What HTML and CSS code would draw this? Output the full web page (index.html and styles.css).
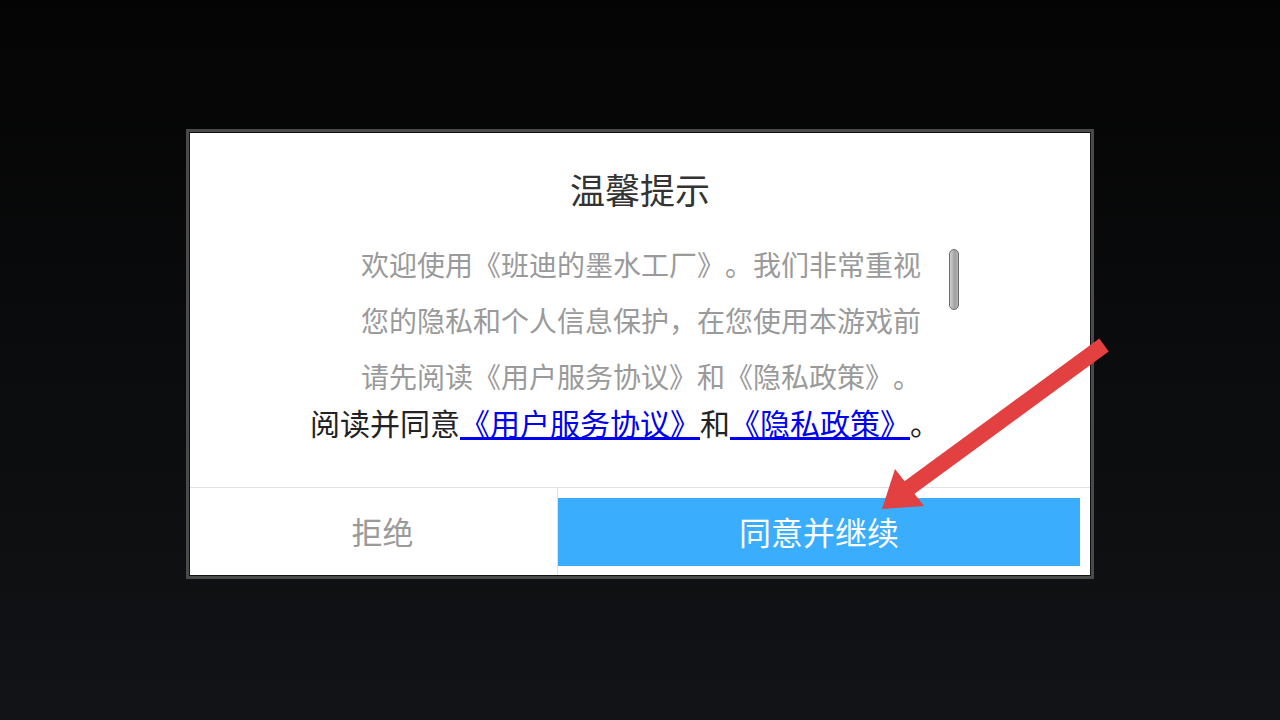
FILE: index.html
```html
<!DOCTYPE html>
<html lang="zh-CN">
<head>
    <meta charset="UTF-8">
    <meta name="viewport" content="width=device-width, initial-scale=1.0">
    <title>温馨提示</title>
    <link rel="stylesheet" href="styles.css">
</head>
<body>
    <div class="dialog">
        <h1 class="dialog-title">温馨提示</h1>

        <div class="dialog-body">
            <div class="notice-row">
                <div class="notice-text">欢迎使用《班迪的墨水工厂》。我们非常重视您的隐私和个人信息保护，在您使用本游戏前请先阅读《用户服务协议》和《隐私政策》。</div>
                <span class="scroll-thumb"></span>
            </div>
            <p class="agree-line">阅读并同意<a href="#">《用户服务协议》</a>和<a href="#">《隐私政策》</a>。</p>
        </div>

        <div class="dialog-footer">
            <button class="refuse-btn">拒绝</button>
            <div class="accept-cell">
                <button class="accept-btn">同意并继续</button>
            </div>
        </div>
    </div>

    <!-- red hint arrow pointing at the accept button -->
    <svg class="hint-arrow" width="1280" height="720" viewBox="0 0 1280 720">
        <line x1="1104" y1="345" x2="902" y2="493" stroke="#e34041" stroke-width="16" />
        <polygon points="882,509 895,469 924,506" fill="#e34041" />
    </svg>
</body>
</html>
```

FILE: styles.css
```css
body {
    margin: 0;
    width: 1280px;
    height: 720px;
    position: relative;
    overflow: hidden;
    background: linear-gradient(to bottom, #040404, #111316);
    font-family: "Noto Sans CJK SC", "Noto Sans", sans-serif;
    text-spacing-trim: space-all;
}

.dialog {
    box-sizing: border-box;
    width: 908px;
    height: 450px;
    margin: 129px auto 0;
    padding: 1px;
    background-color: #ffffff;
    border: 3px solid #4a4a4a;
    box-shadow: inset 0 0 0 1px #111;
    display: flex;
    flex-direction: column;
}

.dialog-title {
    margin: 32px 0 0;
    font-size: 35px;
    font-weight: normal;
    line-height: 48px;
    text-align: center;
    color: #333;
}

.dialog-body {
    width: 660px;
    margin: 23px auto 0;
}

.notice-row {
    display: flex;
    padding-left: 51px;
}

.notice-text {
    width: 564px;
    height: 168px;
    overflow: hidden;
    font-size: 28px;
    line-height: 56px;
    color: #9a9a9a;
}

.scroll-thumb {
    box-sizing: border-box;
    width: 10px;
    height: 61px;
    margin: 13px 0 0 24px;
    border: 1px solid #6c6c6c;
    border-radius: 5px;
    background: linear-gradient(to right, #d0d0d0, #a0a0a0 60%, #b4b4b4);
}

.agree-line {
    margin: -2px 0 0;
    font-size: 30px;
    line-height: 40px;
    color: #222;
}

.agree-line a {
    color: #0000f0;
    text-decoration: underline;
}

.dialog-footer {
    margin-top: auto;
    height: 88px;
    box-sizing: border-box;
    border-top: 1px solid #e2e2e2;
    display: flex;
}

.refuse-btn {
    width: 368px;
    border: none;
    border-right: 1px solid #e2e2e2;
    background: #ffffff;
    font-family: inherit;
    font-size: 31px;
    color: #9a9a9a;
    padding: 0 0 2px 18px;
    cursor: pointer;
}

.accept-cell {
    flex: 1;
    display: flex;
    padding: 10px 10px 9px 0;
}

.accept-btn {
    flex: 1;
    border: none;
    background-color: #3aadfd;
    font-family: inherit;
    font-size: 32px;
    color: #ffffff;
    padding: 0 0 2px;
    cursor: pointer;
}

.hint-arrow {
    position: absolute;
    top: 0;
    left: 0;
    pointer-events: none;
}
```
